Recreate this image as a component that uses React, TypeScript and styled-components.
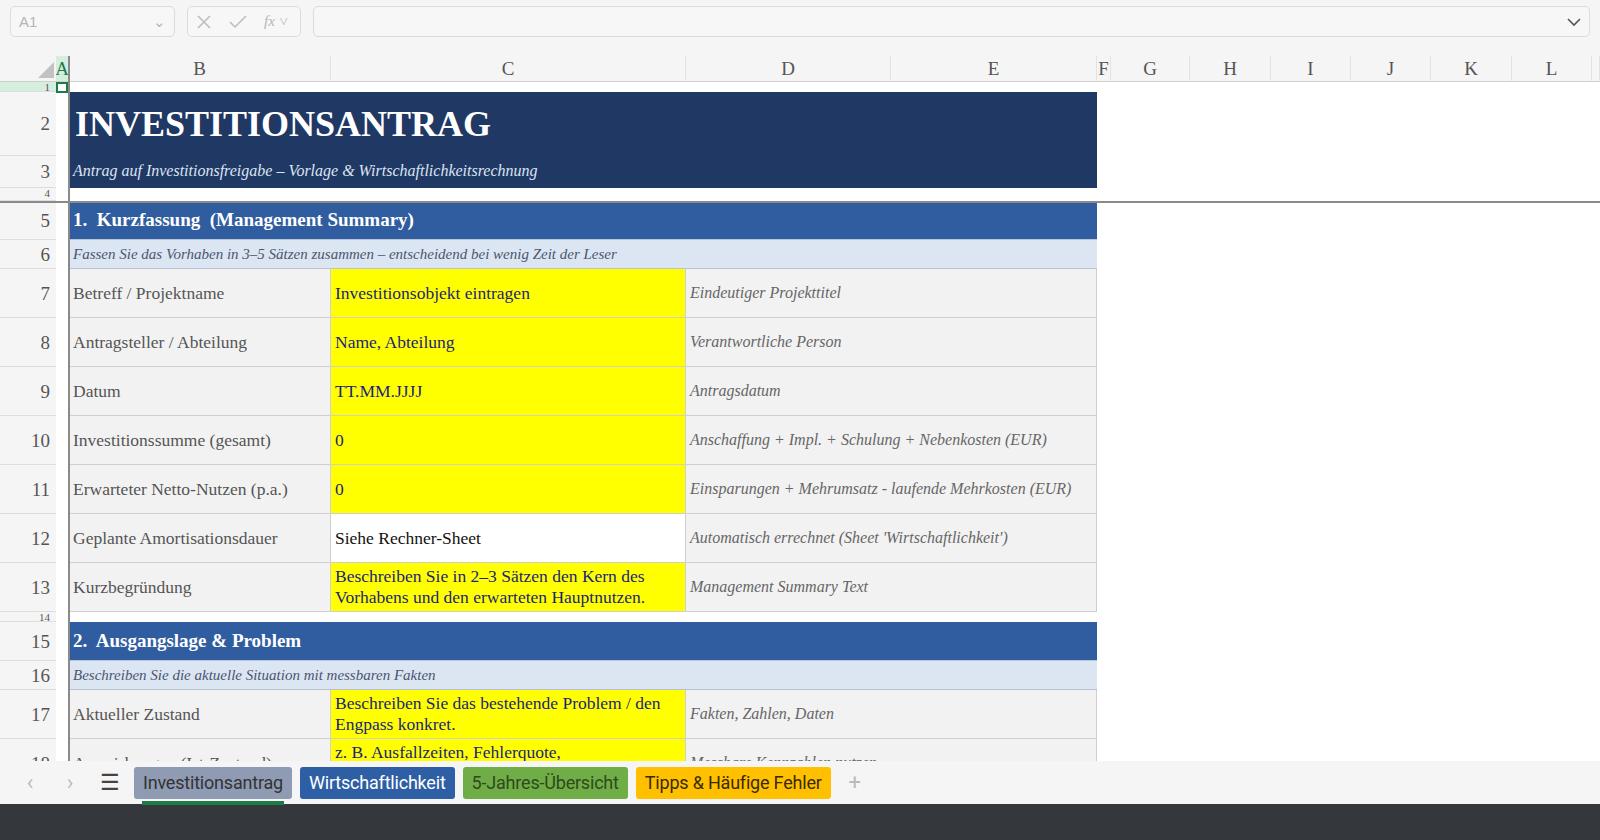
import React from 'react';
import styled, { createGlobalStyle } from 'styled-components';

const Global = createGlobalStyle`
  html, body { margin: 0; padding: 0; background: #fff; }
  body { width: 1600px; height: 840px; overflow: hidden; font-family: "Liberation Serif", serif; }
`;

const COLS = '56px 13px 262px 355px 205px 206px 14px 79px 81px 80px 80px 81px 80px 1fr';

const Page = styled.div`
  display: flex;
  flex-direction: column;
  height: 840px;
`;

const Toolbar = styled.div`
  height: 56px;
  flex: none;
  background: #f5f5f5;
  display: flex;
  align-items: flex-start;
  padding: 6px 10px 0;
  gap: 12px;
  box-sizing: border-box;
`;

const Box = styled.div<{ w?: string }>`
  height: 31px;
  width: ${p => p.w || 'auto'};
  flex: ${p => (p.w ? 'none' : '1')};
  border: 1px solid #dcdcdc;
  border-radius: 5px;
  background: #f7f7f7;
  display: flex;
  align-items: center;
  justify-content: space-between;
  padding: 0 8px;
  box-sizing: border-box;
  color: #b5b5b5;
  font-family: "Liberation Sans", sans-serif;
  font-size: 15px;
`;

const Icons = styled.div`
  display: flex;
  gap: 16px;
  align-items: center;
`;

const Sheet = styled.div`
  flex: 1;
  position: relative;
  overflow: hidden;
`;

const Row = styled.div<{ h: number }>`
  display: grid;
  grid-template-columns: ${COLS};
  height: ${p => p.h}px;
`;

const RowHead = styled.div<{ tiny?: boolean; active?: boolean }>`
  background: ${p => (p.active ? '#d6eedf' : '#f5f5f5')};
  border-bottom: 1px solid #dedede;
  color: #555;
  font-size: ${p => (p.tiny ? '11px' : '19px')};
  display: flex;
  align-items: ${p => (p.tiny ? 'flex-start' : 'center')};
  justify-content: flex-end;
  padding-right: 6px;
  overflow: hidden;
  line-height: 1;
  box-sizing: border-box;
`;

const ColHead = styled.div<{ active?: boolean }>`
  background: ${p => (p.active ? '#d6eedf' : '#f5f5f5')};
  color: ${p => (p.active ? '#1e7b45' : '#555')};
  border-right: 1px solid #e2e2e2;
  border-bottom: 1px solid #cfcfcf;
  font-size: 19px;
  display: flex;
  align-items: flex-end;
  padding-bottom: 1px;
  justify-content: center;
  overflow: hidden;
`;

const Corner = styled(ColHead)`
  position: relative;
  border-right: none;
  &::after {
    content: '';
    position: absolute;
    right: 2px;
    bottom: 3px;
    border-left: 16px solid transparent;
    border-bottom: 16px solid #c2c2c2;
  }
`;

const Blank = styled.div``;

const Banner = styled.div<{ sub?: boolean }>`
  grid-column: 3 / 7;
  background: #1f3864;
  display: flex;
  align-items: ${p => (p.sub ? 'flex-start' : 'center')};
  padding: ${p => (p.sub ? '6px 0 0 4px' : '0 0 0 6px')};
  box-sizing: border-box;
  font-weight: ${p => (p.sub ? 400 : 700)};
  font-style: ${p => (p.sub ? 'italic' : 'normal')};
  font-size: ${p => (p.sub ? '16px' : '36px')};
  color: ${p => (p.sub ? '#dce4f2' : '#fff')};
`;

const Section = styled.div`
  grid-column: 3 / 7;
  background: #2f5d9f;
  color: #fff;
  font-weight: 700;
  font-size: 19px;
  display: flex;
  align-items: center;
  padding-left: 4px;
  border-bottom: 1px solid #b8c6dc;
`;

const Hint = styled.div`
  grid-column: 3 / 7;
  background: #dce6f2;
  color: #4a5570;
  font-style: italic;
  font-size: 15px;
  display: flex;
  align-items: center;
  padding-left: 4px;
  border-bottom: 1px solid #b9c3d3;
`;

const Cell = styled.div<{ kind: 'label' | 'input' | 'calc' | 'note' }>`
  background: ${p => (p.kind === 'input' ? '#ffff00' : p.kind === 'calc' ? '#ffffff' : '#f2f2f2')};
  color: ${p => (p.kind === 'input' ? '#1c1f7a' : p.kind === 'calc' ? '#111' : p.kind === 'note' ? '#666' : '#555')};
  font-style: ${p => (p.kind === 'note' ? 'italic' : 'normal')};
  font-size: ${p => (p.kind === 'note' ? '16px' : '17.5px')};
  grid-column: ${p => (p.kind === 'note' ? 'span 2' : 'span 1')};
  border-right: 1px solid #cfcfcf;
  border-bottom: 1px solid #cfcfcf;
  display: flex;
  align-items: center;
  padding: 0 4px;
  line-height: 1.2;
  overflow: hidden;
  white-space: pre-line;
`;

const FreezeH = styled.div`
  position: absolute;
  left: 0;
  right: 0;
  top: 145px;
  height: 2px;
  background: #8a8a8a;
`;

const FreezeV = styled.div`
  position: absolute;
  top: 0;
  bottom: 0;
  left: 68px;
  width: 2px;
  background: #8a8a8a;
`;

const Selected = styled.div`
  position: absolute;
  left: 56px;
  top: 26px;
  width: 12px;
  height: 11px;
  border: 2px solid #1e7b45;
  box-sizing: border-box;
`;

const TabBar = styled.div`
  height: 43px;
  background: #f5f5f5;
  display: flex;
  align-items: center;
  gap: 8px;
  padding-left: 14px;
  font-family: Roboto, "Liberation Sans", sans-serif;
  flex: none;
`;

const Nav = styled.span`
  color: #bbb;
  font-size: 22px;
  width: 32px;
  text-align: center;
`;

const Tab = styled.div<{ bg: string; fg: string; active?: boolean }>`
  position: relative;
  height: 32px;
  padding: 0 9px;
  background: ${p => p.bg};
  color: ${p => p.fg};
  border-radius: 3px;
  display: flex;
  align-items: center;
  font-size: 18px;
  letter-spacing: -0.2px;
  ${p => p.active && `&::after { content: ''; position: absolute; left: 8px; right: 8px; bottom: -6px; height: 4px; background: #1e7b45; }`}
`;

const Footer = styled.div`
  height: 36px;
  background: #34373b;
  flex: none;
`;

type R = { n: number; b: string; c: string; d: string; calc?: boolean };

const rows1: R[] = [
  { n: 7, b: 'Betreff / Projektname', c: 'Investitionsobjekt eintragen', d: 'Eindeutiger Projekttitel' },
  { n: 8, b: 'Antragsteller / Abteilung', c: 'Name, Abteilung', d: 'Verantwortliche Person' },
  { n: 9, b: 'Datum', c: 'TT.MM.JJJJ', d: 'Antragsdatum' },
  { n: 10, b: 'Investitionssumme (gesamt)', c: '0', d: 'Anschaffung + Impl. + Schulung + Nebenkosten (EUR)' },
  { n: 11, b: 'Erwarteter Netto-Nutzen (p.a.)', c: '0', d: 'Einsparungen + Mehrumsatz - laufende Mehrkosten (EUR)' },
  { n: 12, b: 'Geplante Amortisationsdauer', c: 'Siehe Rechner-Sheet', d: "Automatisch errechnet (Sheet 'Wirtschaftlichkeit')", calc: true },
  { n: 13, b: 'Kurzbegründung', c: 'Beschreiben Sie in 2–3 Sätzen den Kern des\nVorhabens und den erwarteten Hauptnutzen.', d: 'Management Summary Text' },
];

const rows2: R[] = [
  { n: 17, b: 'Aktueller Zustand', c: 'Beschreiben Sie das bestehende Problem / den\nEngpass konkret.', d: 'Fakten, Zahlen, Daten' },
  { n: 18, b: 'Auswirkungen (Ist-Zustand)', c: 'z. B. Ausfallzeiten, Fehlerquote,\nMehraufwand', d: 'Messbare Kennzahlen nutzen' },
];

const Tail = () => (
  <>
    {Array.from({ length: 7 }).map((_, i) => <Blank key={i} />)}
  </>
);

const DataRow = ({ r }: { r: R }) => (
  <Row h={49}>
    <RowHead>{r.n}</RowHead>
    <Blank />
    <Cell kind="label">{r.b}</Cell>
    <Cell kind={r.calc ? 'calc' : 'input'}>{r.c}</Cell>
    <Cell kind="note">{r.d}</Cell>
    <Tail />
  </Row>
);

const Small = ({ n, h }: { n: number; h: number }) => (
  <Row h={h}>
    <RowHead tiny>{n}</RowHead>
  </Row>
);

const cols = ['B', 'C', 'D', 'E', 'F', 'G', 'H', 'I', 'J', 'K', 'L'];

const App = () => (
  <Page>
    <Global />
    <Toolbar>
      <Box w="165px">A1 <span>⌄</span></Box>
      <Box w="114px">
        <Icons>
          <svg width="16" height="16" viewBox="0 0 16 16" stroke="#bbb" strokeWidth="1.5"><path d="M2 2l12 12M14 2L2 14" /></svg>
          <svg width="20" height="16" viewBox="0 0 20 16" stroke="#bbb" strokeWidth="1.5" fill="none"><path d="M2 8l5 5L18 2" /></svg>
          <span style={{ fontStyle: 'italic', fontFamily: 'Liberation Serif, serif' }}>fx ˅</span>
        </Icons>
      </Box>
      <Box>
        <span />
        <svg width="14" height="10" viewBox="0 0 14 10" stroke="#555" strokeWidth="1.6" fill="none"><path d="M1 2l6 6 6-6" /></svg>
      </Box>
    </Toolbar>
    <Sheet>
      <Row h={26}>
        <Corner />
        <ColHead active>A</ColHead>
        {cols.map(c => <ColHead key={c}>{c}</ColHead>)}
        <ColHead />
      </Row>
      <Row h={10}><RowHead tiny active>1</RowHead></Row>
      <Row h={64}>
        <RowHead>2</RowHead><Blank />
        <Banner>INVESTITIONSANTRAG</Banner>
      </Row>
      <Row h={32}>
        <RowHead>3</RowHead><Blank />
        <Banner sub>Antrag auf Investitionsfreigabe – Vorlage &amp; Wirtschaftlichkeitsrechnung</Banner>
      </Row>
      <Small n={4} h={13} />
      <Row h={39}>
        <RowHead>5</RowHead><Blank />
        <Section>1.&nbsp; Kurzfassung &nbsp;(Management Summary)</Section>
      </Row>
      <Row h={29}>
        <RowHead>6</RowHead><Blank />
        <Hint>Fassen Sie das Vorhaben in 3–5 Sätzen zusammen – entscheidend bei wenig Zeit der Leser</Hint>
      </Row>
      {rows1.map(r => <DataRow key={r.n} r={r} />)}
      <Small n={14} h={10} />
      <Row h={39}>
        <RowHead>15</RowHead><Blank />
        <Section>2.&nbsp; Ausgangslage &amp; Problem</Section>
      </Row>
      <Row h={29}>
        <RowHead>16</RowHead><Blank />
        <Hint>Beschreiben Sie die aktuelle Situation mit messbaren Fakten</Hint>
      </Row>
      {rows2.map(r => <DataRow key={r.n} r={r} />)}
      <FreezeH />
      <FreezeV />
      <Selected />
    </Sheet>
    <TabBar>
      <Nav>‹</Nav>
      <Nav>›</Nav>
      <Nav style={{ color: '#444' }}>☰</Nav>
      <Tab bg="#8e9bb3" fg="#333" active>Investitionsantrag</Tab>
      <Tab bg="#2e5fa5" fg="#fff">Wirtschaftlichkeit</Tab>
      <Tab bg="#70ad47" fg="#2d4a1d">5-Jahres-Übersicht</Tab>
      <Tab bg="#ffc000" fg="#3a2a00">Tipps &amp; Häufige Fehler</Tab>
      <Nav>+</Nav>
    </TabBar>
    <Footer />
  </Page>
);

export default App;
